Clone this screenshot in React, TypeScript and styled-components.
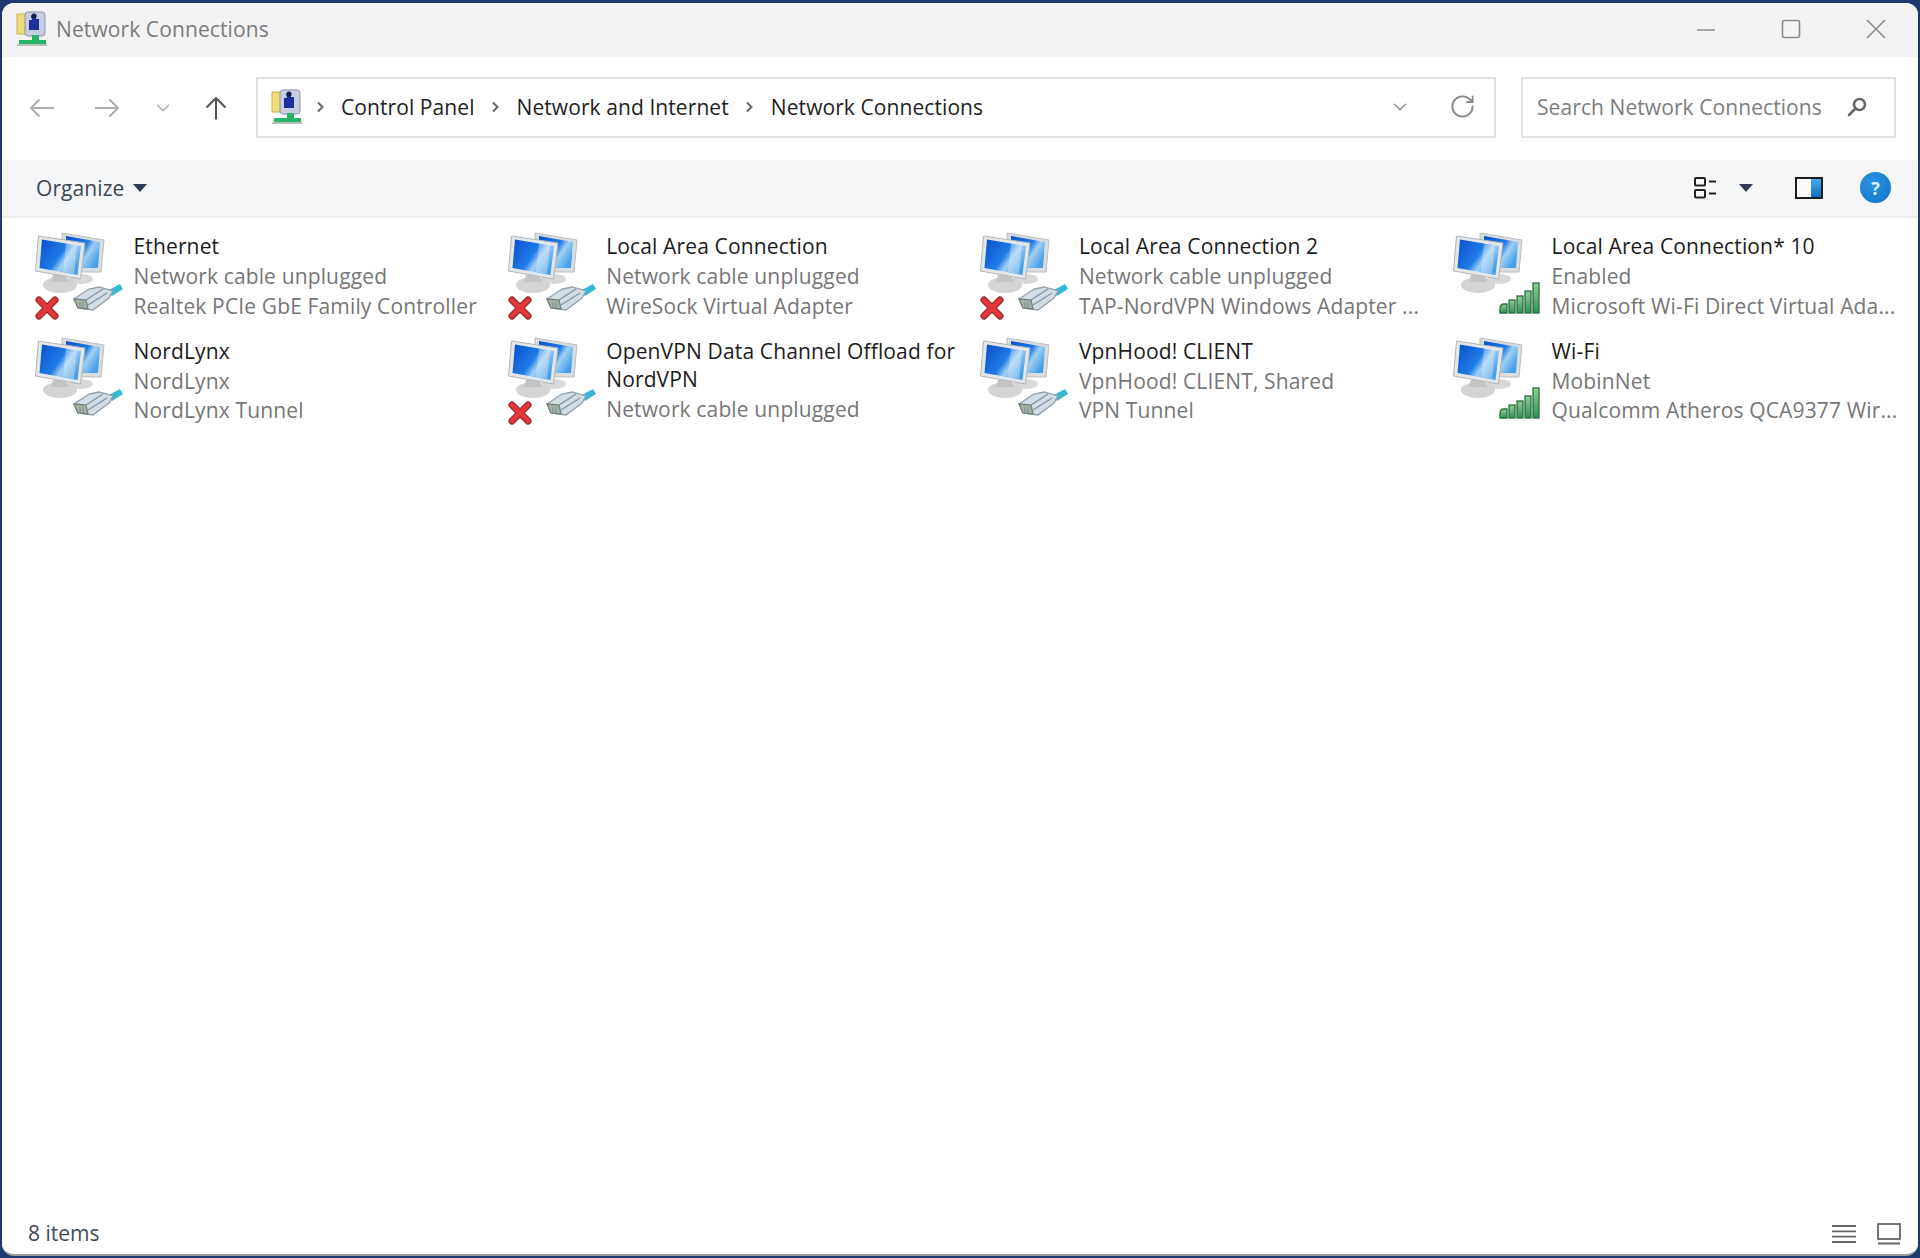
import React from "react";
import styled, { createGlobalStyle } from "styled-components";
import { ChevronDown, RotateCw } from "lucide-react";

const Global = createGlobalStyle`
  html, body { margin: 0; padding: 0; height: 1258px; overflow: hidden; background: #1d3a6e; }
  #root { height: 1258px; }
  * { box-sizing: border-box; }
`;

const Desktop = styled.div`
  width: 1920px;
  height: 1258px;
  padding: 3px 2px 2px 2px;
  background: #1d3a6e;
  font-family: "Open Sans", "Noto Sans", "Liberation Sans", sans-serif;
`;

const Window = styled.div`
  height: 100%;
  display: flex;
  flex-direction: column;
  border-radius: 12px;
  overflow: hidden;
  background: #fff;
  border-bottom: 2px solid #9a9a9a;
`;

const TitleBar = styled.header`
  flex: 0 0 54px;
  display: flex;
  align-items: center;
  padding: 0 0 3px 14px;
  background: #f3f3f3;
`;

const WindowTitle = styled.span`
  margin-left: 9px;
  font-size: 21px;
  letter-spacing: 0.1px;
  color: #7c7c7c;
`;

const WindowControls = styled.div`
  margin-left: auto;
  display: flex;
  align-items: center;
  padding-right: 32px;
  gap: 65px;
  color: #8a8a8a;
`;

const NavBar = styled.nav`
  flex: 0 0 103px;
  display: flex;
  align-items: center;
  padding: 0 22px 2px 27px;
  background: #fff;
`;

const NavButton = styled.span<{ $w: number; $dim?: boolean }>`
  display: flex;
  width: ${(p) => p.$w}px;
  color: ${(p) => (p.$dim ? "#aeaeae" : "#555")};
`;

const AddressBox = styled.div`
  width: 1240px;
  height: 61px;
  margin-left: 3px;
  display: flex;
  align-items: center;
  padding: 0 18px 2px 13px;
  border: 2px solid #e2e2e2;
  font-size: 21px;
  letter-spacing: 0.08px;
  color: #222;
`;

const Crumb = styled.span`
  white-space: nowrap;
`;

const CrumbSep = styled.span`
  display: flex;
  margin: 0 17px 0 16px;
  color: #666;
`;

const FirstSep = styled(CrumbSep)`
  margin: 0 16px 0 14px;
`;

const AddressTools = styled.div`
  margin-left: auto;
  display: flex;
  align-items: center;
  gap: 38px;
  color: #8a8a8a;
`;

const SearchBox = styled.div`
  width: 375px;
  height: 61px;
  margin-left: auto;
  display: flex;
  align-items: center;
  justify-content: space-between;
  padding: 0 26px 2px 14px;
  border: 2px solid #e2e2e2;
  font-size: 21px;
  letter-spacing: 0.08px;
  color: #7d7d7d;
  white-space: nowrap;
`;

const CommandBar = styled.div`
  flex: 0 0 58px;
  display: flex;
  align-items: center;
  padding: 0 27px 1px 34px;
  background: #f5f6f7;
  border-bottom: 2px solid #ececec;
`;

const Organize = styled.span`
  font-size: 21px;
  letter-spacing: 0.08px;
  color: #3c4654;
`;

const Caret = styled.span`
  width: 0;
  height: 0;
  border-left: 7.5px solid transparent;
  border-right: 7.5px solid transparent;
  border-top: 8px solid #2f3b52;
`;

const OrganizeCaret = styled(Caret)`
  margin-left: 9px;
`;

const CommandTools = styled.div`
  margin-left: auto;
  display: flex;
  align-items: center;
`;

const ViewCaret = styled(Caret)`
  margin: 0 42px 0 21px;
`;

const HelpButton = styled.span`
  width: 31px;
  height: 31px;
  margin-left: 37px;
  display: flex;
  align-items: center;
  justify-content: center;
  border-radius: 50%;
  background: radial-gradient(circle at 40% 35%, #2b93e4, #0f74c8);
  color: #dceeff;
  font-size: 18px;
  font-weight: 700;
`;

const Items = styled.main`
  flex: 1;
  display: grid;
  grid-template-columns: repeat(4, 472.7px);
  grid-auto-rows: 104.5px;
  align-content: start;
  padding: 11px 0 0 31px;
  background: #fff;
`;

const Item = styled.div`
  display: flex;
  min-width: 0;
`;

const IconSlot = styled.div`
  flex: 0 0 100.500px;
  height: 96px;
  filter: blur(0.45px);
`;

const ItemText = styled.div`
  min-width: 0;
  padding-top: 3px;
`;

const ItemTitle = styled.div`
  font-size: 21px;
  line-height: 28px;
  letter-spacing: 0.14px;
  color: #1c1c1c;
  margin-bottom: 2px;
`;

const ItemDetail = styled.div`
  font-size: 21px;
  line-height: 29.5px;
  letter-spacing: 0.14px;
  color: #767676;
  white-space: nowrap;
`;

const StatusBar = styled.footer`
  flex: 0 0 48px;
  display: flex;
  align-items: center;
  padding: 5px 17px 0 26px;
  background: #fff;
`;

const StatusText = styled.span`
  font-size: 21px;
  color: #3f4b5c;
`;

const StatusIcons = styled.div`
  margin-left: auto;
  margin-top: 2px;
  display: flex;
  align-items: center;
  gap: 21px;
  color: #666;
`;

const Chevron = () => (
  <svg width="9" height="14" viewBox="0 0 9 14" fill="none" stroke="currentColor" strokeWidth="2">
    <path d="M2 2.5 6.500 7 2 11.500" />
  </svg>
);

const ArrowL = () => (
  <svg width="26" height="22" viewBox="0 0 26 22" fill="none" stroke="currentColor" strokeWidth="2">
    <path d="M25 11H2M10.500 2.500 2 11l8.500 8.500" />
  </svg>
);

const ArrowR = () => (
  <svg width="26" height="22" viewBox="0 0 26 22" fill="none" stroke="currentColor" strokeWidth="2">
    <path d="M1 11h23M15.500 2.500 24 11l-8.500 8.500" />
  </svg>
);

const ArrowU = () => (
  <svg width="24" height="24" viewBox="0 0 24 24" fill="none" stroke="currentColor" strokeWidth="2">
    <path d="M12 23.500V2M2.500 11.500 12 2l9.500 9.500" />
  </svg>
);

const PanelIcon = () => (
  <svg width="31" height="38" viewBox="0 0 31 38">
    <path d="M1 4h12l3 4v16H1z" fill="#f0dc78" stroke="#c9b24e" />
    <rect x="9" y="2" width="20" height="24" rx="3" fill="#c9cde0" stroke="#8f93ad" />
    <path d="M15 6c3-2 6 0 5 3h3v11H13V10h3z" fill="#1c2f9c" />
    <circle cx="18" cy="6" r="2.600" fill="#10204f" />
    <rect x="16" y="25" width="7" height="5" fill="#25b56a" />
    <rect x="3" y="30" width="27" height="4" fill="#25b56a" />
    <rect x="1" y="34" width="30" height="2" fill="#b7c0b7" />
  </svg>
);

type Status = "off" | "plug" | "signal";

const NetIcon: React.FC<{ kind: Status; id: string }> = ({ kind, id }) => (
  <svg width="92" height="96" viewBox="0 0 92 96">
    <defs>
      <linearGradient id={`s${id}`} x1="0" y1="0" x2="1" y2="0.6">
        <stop offset="0" stopColor="#0a4fc9" />
        <stop offset="0.55" stopColor="#1f7be6" />
        <stop offset="0.72" stopColor="#9fd0f4" />
        <stop offset="1" stopColor="#4aa0e8" />
      </linearGradient>
      <linearGradient id={`g${id}`} x1="0" y1="0" x2="0" y2="1">
        <stop offset="0" stopColor="#8fd08f" />
        <stop offset="1" stopColor="#2f9152" />
      </linearGradient>
    </defs>
    <ellipse cx="48" cy="50" rx="12" ry="5" fill="#d8d8d8" />
    <path d="M29 4 71 11 68 43 50 43 29 38z" fill="#d9dde0" stroke="#b9bec2" />
    <path d="M33 7 67 13 65 39 48 39 33 36z" fill={`url(#s${id})`} />
    <ellipse cx="27" cy="56" rx="17" ry="8" fill="#d4d4d4" />
    <path d="M20 46h13l3 7H18z" fill="#c4c4c4" />
    <path d="M5.500 7 52 14 47.500 50 2.500 42z" fill="#e4e7e9" stroke="#b0b5b9" />
    <path d="M9 10.500 48 17 44.500 46 6.500 39z" fill={`url(#s${id})`} />
    <path d="M33 14 44 16 41 45 30 43z" fill="#fff" opacity="0.32" />
    {kind !== "signal" && (
      <g>
        <path d="M74 62 87 55 90 60 79 67z" fill="#39b7d6" />
        <path d="M41 70 56 60 66 58 80 62 76 69 60 81 45 79z" fill="#d3dbe4" stroke="#8fa0ad" strokeWidth="1.300" />
        <path d="M41 70 53 71 55 80 45 79z" fill="#a9b3a2" stroke="#74827a" strokeWidth="1.300" />
        <path d="M53 71 70 60M55 76 74 64M47 73v5M50 73v6" stroke="#8296a8" strokeWidth="1.400" fill="none" />
      </g>
    )}
    {kind === "off" && (
      <g fill="none" strokeLinecap="round">
        <path d="M6 71 22 87M22 71 6 87" stroke="#96262a" strokeWidth="7" />
        <path d="M6 71 22 87M22 71 6 87" stroke="#e2383a" strokeWidth="4.600" />
      </g>
    )}
    {kind === "signal" && (
      <g fill={`url(#g${id})`} stroke="#2a6e44" strokeWidth="1.300">
        <path d="M49 80q0-5 4-5h3v9h-7z" />
        <rect x="58" y="71" width="6" height="13" />
        <rect x="66" y="67" width="6" height="17" />
        <rect x="74" y="62" width="6" height="22" />
        <rect x="82" y="54" width="6" height="30" />
      </g>
    )}
  </svg>
);

const connections: { title: string[]; lines: string[]; kind: Status }[] = [
  { title: ["Ethernet"], lines: ["Network cable unplugged", "Realtek PCIe GbE Family Controller"], kind: "off" },
  { title: ["Local Area Connection"], lines: ["Network cable unplugged", "WireSock Virtual Adapter"], kind: "off" },
  { title: ["Local Area Connection 2"], lines: ["Network cable unplugged", "TAP-NordVPN Windows Adapter ..."], kind: "off" },
  { title: ["Local Area Connection* 10"], lines: ["Enabled", "Microsoft Wi-Fi Direct Virtual Ada..."], kind: "signal" },
  { title: ["NordLynx"], lines: ["NordLynx", "NordLynx Tunnel"], kind: "plug" },
  { title: ["OpenVPN Data Channel Offload for", "NordVPN"], lines: ["Network cable unplugged"], kind: "off" },
  { title: ["VpnHood! CLIENT"], lines: ["VpnHood! CLIENT, Shared", "VPN Tunnel"], kind: "plug" },
  { title: ["Wi-Fi"], lines: ["MobinNet", "Qualcomm Atheros QCA9377 Wir..."], kind: "signal" },
];

export default function App() {
  return (
    <Desktop>
      <Global />
      <Window>
        <TitleBar>
          <PanelIcon />
          <WindowTitle>Network Connections</WindowTitle>
          <WindowControls>
            <svg width="20" height="20" viewBox="0 0 20 20" stroke="currentColor" strokeWidth="1.600"><path d="M1 11h18" /></svg>
            <svg width="20" height="20" viewBox="0 0 20 20" fill="none" stroke="currentColor" strokeWidth="1.600"><rect x="1.500" y="1.500" width="17" height="17" rx="2" /></svg>
            <svg width="20" height="20" viewBox="0 0 20 20" stroke="currentColor" strokeWidth="1.600"><path d="M1 1l18 18M19 1 1 19" /></svg>
          </WindowControls>
        </TitleBar>
        <NavBar>
          <NavButton $w={65} $dim><ArrowL /></NavButton>
          <NavButton $w={58} $dim><ArrowR /></NavButton>
          <NavButton $w={52} $dim><ChevronDown size={22} strokeWidth={1.6} /></NavButton>
          <NavButton $w={49}><ArrowU /></NavButton>
          <AddressBox>
            <PanelIcon />
            <FirstSep><Chevron /></FirstSep>
            <Crumb>Control Panel</Crumb>
            <CrumbSep><Chevron /></CrumbSep>
            <Crumb>Network and Internet</Crumb>
            <CrumbSep><Chevron /></CrumbSep>
            <Crumb>Network Connections</Crumb>
            <AddressTools>
              <ChevronDown size={22} strokeWidth={1.6} />
              <RotateCw size={27} strokeWidth={1.7} />
            </AddressTools>
          </AddressBox>
          <SearchBox>
            Search Network Connections
            <svg width="22" height="22" viewBox="0 0 22 22" fill="none" stroke="#666" strokeWidth="2.600">
              <circle cx="13.500" cy="8.500" r="5.500" />
              <path d="M9.500 12.500 3 19" strokeLinecap="round" />
            </svg>
          </SearchBox>
        </NavBar>
        <CommandBar>
          <Organize>Organize</Organize>
          <OrganizeCaret />
          <CommandTools>
            <svg width="24" height="24" viewBox="0 0 24 24" fill="none" stroke="#222" strokeWidth="2">
              <rect x="1" y="2" width="10" height="7.500" rx="1" />
              <rect x="1" y="14" width="10" height="7.500" rx="1" />
              <path d="M15 5.500h7M15 17.500h7" />
            </svg>
            <ViewCaret />
            <svg width="28" height="22" viewBox="0 0 28 22">
              <defs>
                <linearGradient id="pane" x1="0" y1="0" x2="0" y2="1">
                  <stop offset="0" stopColor="#46a8ea" />
                  <stop offset="1" stopColor="#0f6fc4" />
                </linearGradient>
              </defs>
              <rect x="1" y="1" width="26" height="20" fill="#fafafa" stroke="#1d1d1d" strokeWidth="2" />
              <rect x="16" y="2" width="10" height="18" fill="url(#pane)" />
            </svg>
            <HelpButton>?</HelpButton>
          </CommandTools>
        </CommandBar>
        <Items>
          {connections.map((c, i) => (
            <Item key={c.title[0]}>
              <IconSlot><NetIcon kind={c.kind} id={String(i)} /></IconSlot>
              <ItemText>
                <ItemTitle>{c.title.map((t) => <div key={t}>{t}</div>)}</ItemTitle>
                {c.lines.map((l) => <ItemDetail key={l}>{l}</ItemDetail>)}
              </ItemText>
            </Item>
          ))}
        </Items>
        <StatusBar>
          <StatusText>8 items</StatusText>
          <StatusIcons>
            <svg width="24" height="20" viewBox="0 0 24 20" stroke="currentColor" strokeWidth="1.800"><path d="M0 2h24M0 7.300h24M0 12.600h24M0 18h24" /></svg>
            <svg width="24" height="22" viewBox="0 0 24 22" fill="none" stroke="currentColor" strokeWidth="1.800"><rect x="1" y="1" width="22" height="15" /><path d="M1 20.500h22" /></svg>
          </StatusIcons>
        </StatusBar>
      </Window>
    </Desktop>
  );
}
